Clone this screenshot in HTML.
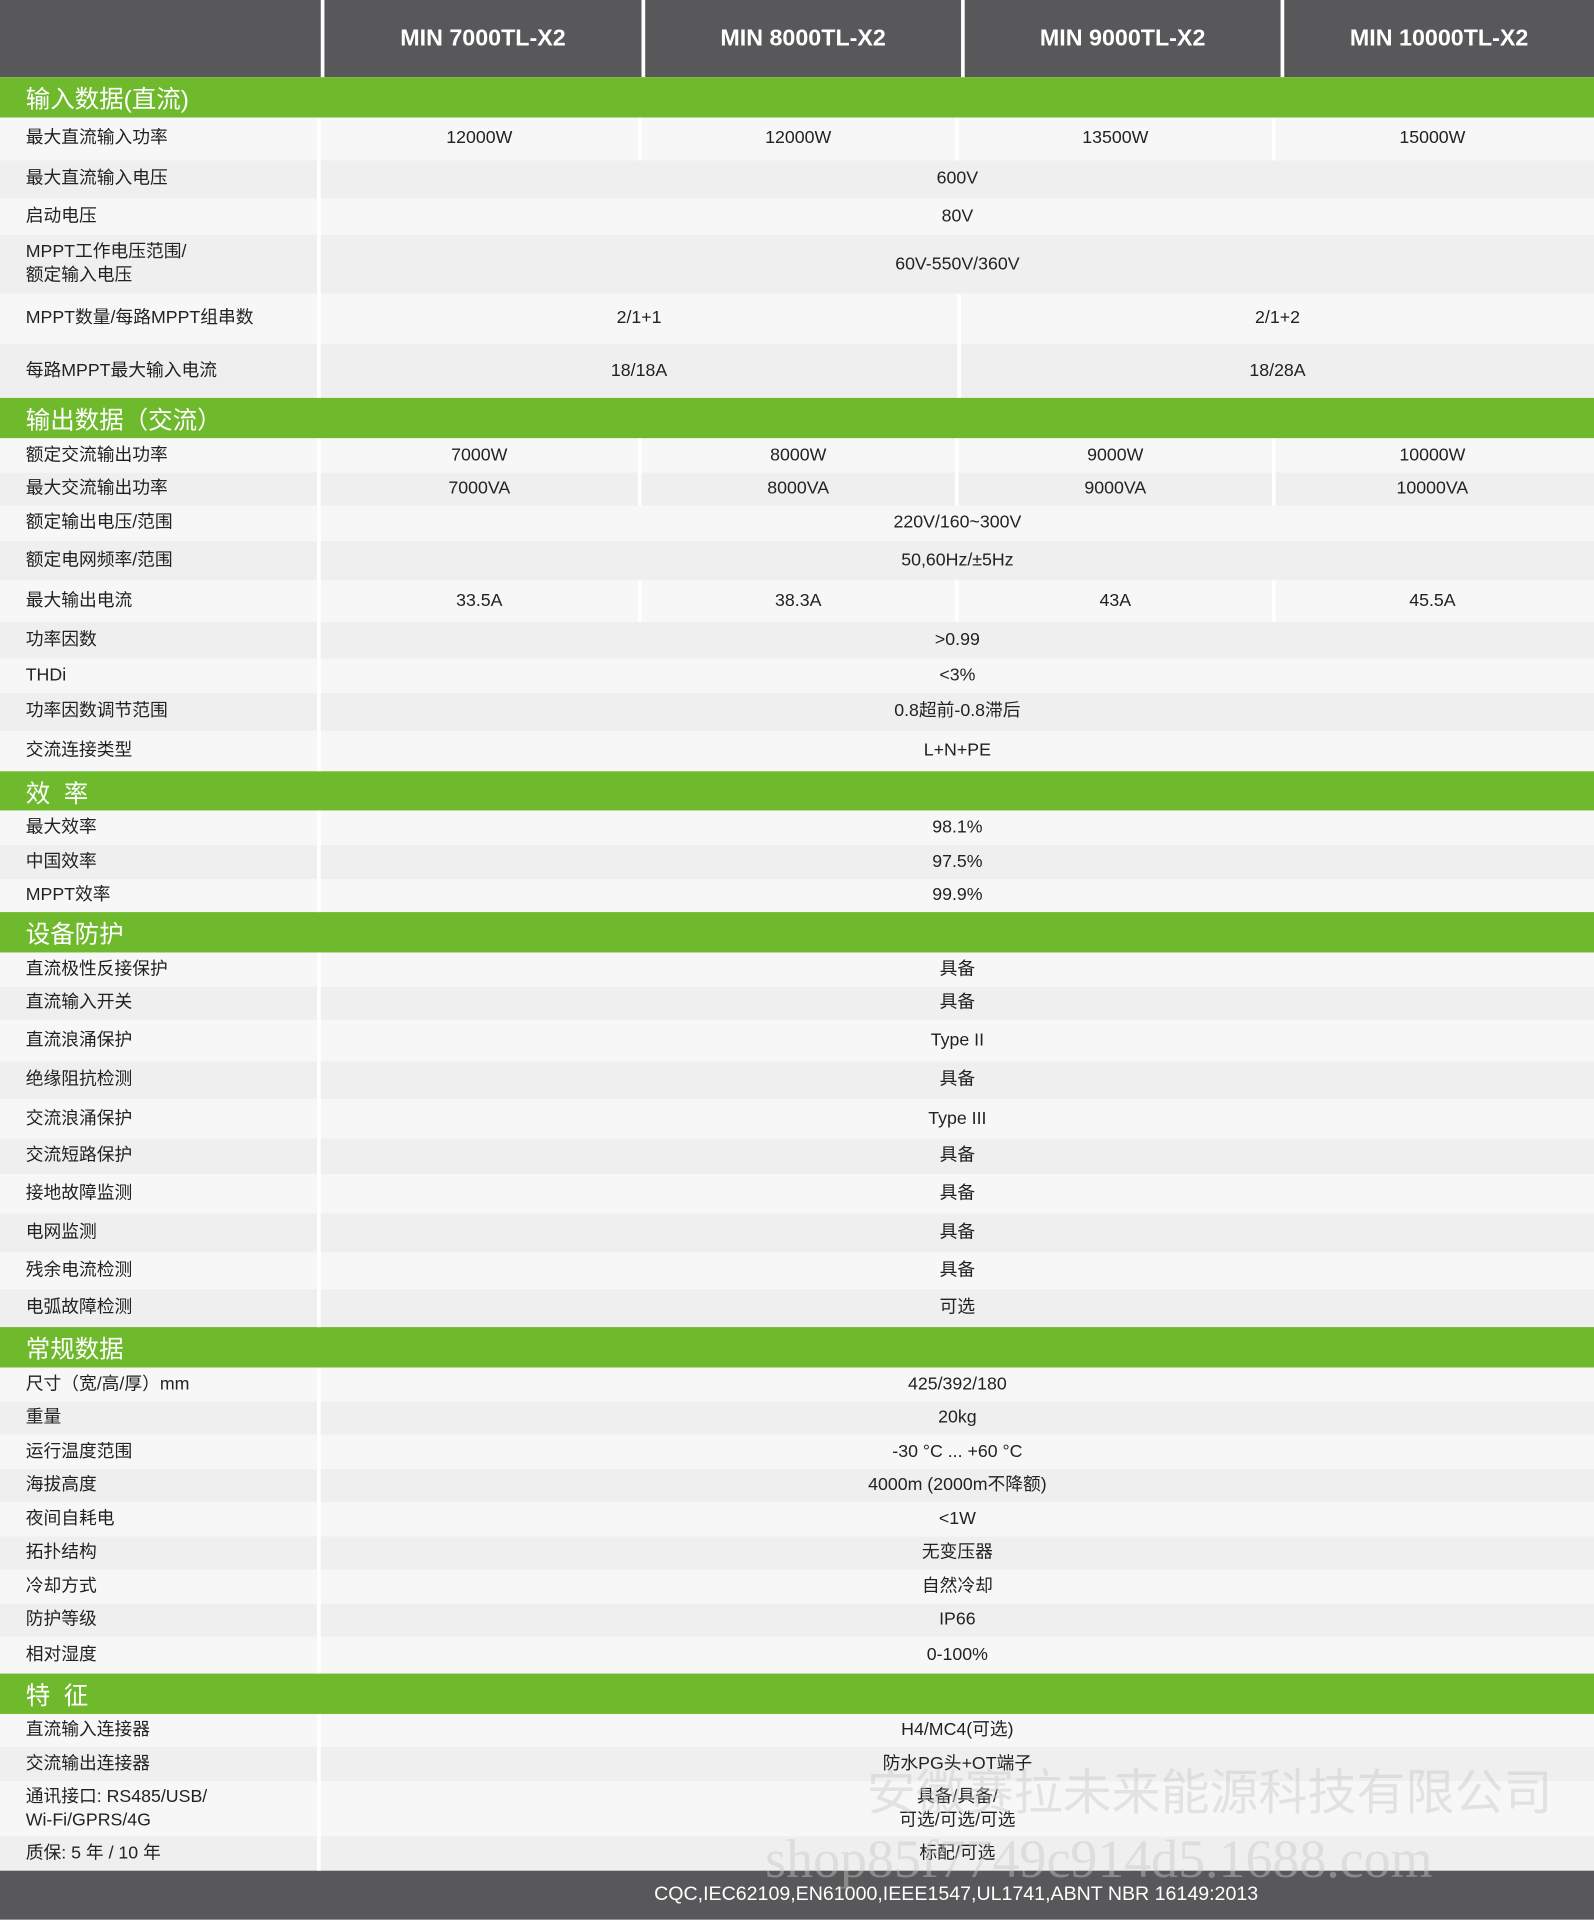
<!DOCTYPE html>
<html><head><meta charset="utf-8"><style>
*{margin:0;padding:0;box-sizing:border-box}
html,body{width:1594px;height:1920px;overflow:hidden;background:#fff}
#w{position:absolute;left:0;top:0;width:1302px;height:1568px;transform:scale(1.22427);transform-origin:0 0;font-family:"Liberation Sans","Noto Sans CJK SC",sans-serif;color:#222}
.hd{display:flex;height:63px;background:#58585a}
.hd div{color:#fff;font-weight:bold;font-size:19px;display:flex;align-items:center;justify-content:center;border-left:3px solid #fff}
.hd div:first-child{border-left:none}
.g{background:#6fba2c;color:#fff;font-size:20px;display:flex;align-items:center;padding-left:21px}
.r{display:flex;font-size:14.5px}
.r>div{display:flex;align-items:center;justify-content:center;text-align:center;line-height:19px}
.r>div.l{justify-content:flex-start;text-align:left;padding-left:21px;width:262px;border-right:3px solid #fff}
.r.a{background:#f7f7f7}.r.b{background:#efefef}
.c4{width:259px}.c4+.c4{border-left:3px solid #fff}
.c2{width:520px}.c2+.c2{border-left:3px solid #fff}
.c1{width:1040px}
.ft{height:40px;background:#58585a;color:#fff;font-size:16px;display:flex;align-items:center;justify-content:center;padding-left:260px}
.wm{position:absolute;color:rgba(200,200,200,0.45);font-size:40px;white-space:nowrap}
</style></head><body><div id="w">
<div class="hd"><div style="width:262px"></div><div style="width:262px">MIN 7000TL-X2</div><div style="width:261px">MIN 8000TL-X2</div><div style="width:261px">MIN 9000TL-X2</div><div style="width:256px">MIN 10000TL-X2</div></div>
<div class="g" style="height:33px">输入数据(直流)</div>
<div class="r a" style="height:35px"><div class="l">最大直流输入功率</div><div class="c4">12000W</div><div class="c4">12000W</div><div class="c4">13500W</div><div class="c4">15000W</div></div>
<div class="r b" style="height:31px"><div class="l">最大直流输入电压</div><div class="c1">600V</div></div>
<div class="r a" style="height:30px"><div class="l">启动电压</div><div class="c1">80V</div></div>
<div class="r b" style="height:48px"><div class="l">MPPT工作电压范围/<br>额定输入电压</div><div class="c1">60V-550V/360V</div></div>
<div class="r a" style="height:41px"><div class="l">MPPT数量/每路MPPT组串数</div><div class="c2">2/1+1</div><div class="c2">2/1+2</div></div>
<div class="r b" style="height:44px"><div class="l">每路MPPT最大输入电流</div><div class="c2">18/18A</div><div class="c2">18/28A</div></div>
<div class="g" style="height:33px">输出数据（交流）</div>
<div class="r a" style="height:28px"><div class="l">额定交流输出功率</div><div class="c4">7000W</div><div class="c4">8000W</div><div class="c4">9000W</div><div class="c4">10000W</div></div>
<div class="r b" style="height:27px"><div class="l">最大交流输出功率</div><div class="c4">7000VA</div><div class="c4">8000VA</div><div class="c4">9000VA</div><div class="c4">10000VA</div></div>
<div class="r a" style="height:29px"><div class="l">额定输出电压/范围</div><div class="c1">220V/160~300V</div></div>
<div class="r b" style="height:32px"><div class="l">额定电网频率/范围</div><div class="c1">50,60Hz/±5Hz</div></div>
<div class="r a" style="height:34px"><div class="l">最大输出电流</div><div class="c4">33.5A</div><div class="c4">38.3A</div><div class="c4">43A</div><div class="c4">45.5A</div></div>
<div class="r b" style="height:30px"><div class="l">功率因数</div><div class="c1">&gt;0.99</div></div>
<div class="r a" style="height:28px"><div class="l">THDi</div><div class="c1">&lt;3%</div></div>
<div class="r b" style="height:31px"><div class="l">功率因数调节范围</div><div class="c1">0.8超前-0.8滞后</div></div>
<div class="r a" style="height:33px"><div class="l">交流连接类型</div><div class="c1">L+N+PE</div></div>
<div class="g" style="height:32px">效&nbsp;&nbsp;率</div>
<div class="r a" style="height:28px"><div class="l">最大效率</div><div class="c1">98.1%</div></div>
<div class="r b" style="height:28px"><div class="l">中国效率</div><div class="c1">97.5%</div></div>
<div class="r a" style="height:27px"><div class="l">MPPT效率</div><div class="c1">99.9%</div></div>
<div class="g" style="height:33px">设备防护</div>
<div class="r a" style="height:28px"><div class="l">直流极性反接保护</div><div class="c1">具备</div></div>
<div class="r b" style="height:27px"><div class="l">直流输入开关</div><div class="c1">具备</div></div>
<div class="r a" style="height:34px"><div class="l">直流浪涌保护</div><div class="c1">Type II</div></div>
<div class="r b" style="height:31px"><div class="l">绝缘阻抗检测</div><div class="c1">具备</div></div>
<div class="r a" style="height:32px"><div class="l">交流浪涌保护</div><div class="c1">Type III</div></div>
<div class="r b" style="height:29px"><div class="l">交流短路保护</div><div class="c1">具备</div></div>
<div class="r a" style="height:32px"><div class="l">接地故障监测</div><div class="c1">具备</div></div>
<div class="r b" style="height:32px"><div class="l">电网监测</div><div class="c1">具备</div></div>
<div class="r a" style="height:30px"><div class="l">残余电流检测</div><div class="c1">具备</div></div>
<div class="r b" style="height:31px"><div class="l">电弧故障检测</div><div class="c1">可选</div></div>
<div class="g" style="height:33px">常规数据</div>
<div class="r a" style="height:28px"><div class="l">尺寸（宽/高/厚）mm</div><div class="c1">425/392/180</div></div>
<div class="r b" style="height:27px"><div class="l">重量</div><div class="c1">20kg</div></div>
<div class="r a" style="height:28px"><div class="l">运行温度范围</div><div class="c1">-30 °C ... +60 °C</div></div>
<div class="r b" style="height:27px"><div class="l">海拔高度</div><div class="c1">4000m (2000m不降额)</div></div>
<div class="r a" style="height:28px"><div class="l">夜间自耗电</div><div class="c1">&lt;1W</div></div>
<div class="r b" style="height:27px"><div class="l">拓扑结构</div><div class="c1">无变压器</div></div>
<div class="r a" style="height:28px"><div class="l">冷却方式</div><div class="c1">自然冷却</div></div>
<div class="r b" style="height:27px"><div class="l">防护等级</div><div class="c1">IP66</div></div>
<div class="r a" style="height:30px"><div class="l">相对湿度</div><div class="c1">0-100%</div></div>
<div class="g" style="height:33px">特&nbsp;&nbsp;征</div>
<div class="r a" style="height:27px"><div class="l">直流输入连接器</div><div class="c1">H4/MC4(可选)</div></div>
<div class="r b" style="height:28px"><div class="l">交流输出连接器</div><div class="c1">防水PG头+OT端子</div></div>
<div class="r a" style="height:45px"><div class="l">通讯接口: RS485/USB/<br>Wi-Fi/GPRS/4G</div><div class="c1">具备/具备/<br>可选/可选/可选</div></div>
<div class="r b" style="height:28px"><div class="l">质保: 5 年 / 10 年</div><div class="c1">标配/可选</div></div>
<div class="ft">CQC,IEC62109,EN61000,IEEE1547,UL1741,ABNT NBR 16149:2013</div>
<div class="wm" style="left:708px;top:1432px">安徽赛拉未来能源科技有限公司</div>
<div class="wm" style="left:625px;top:1493px;font-family:'Liberation Serif',serif;font-size:44px">shop85f7749c914d5.1688.com</div>
</div></body></html>
